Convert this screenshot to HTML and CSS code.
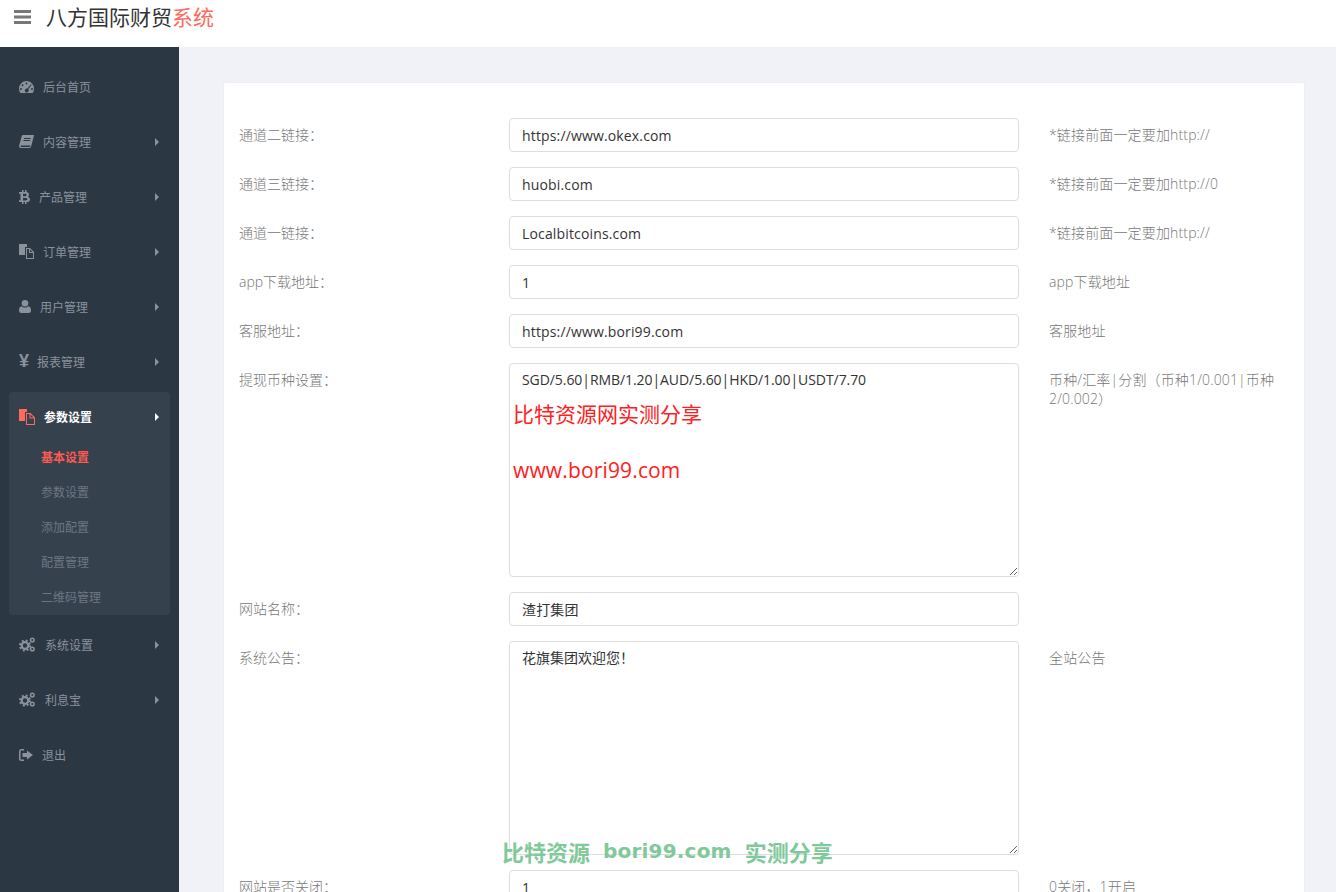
FILE: index.html
```html
<!DOCTYPE html>
<html lang="zh-CN">
<head>
  <meta charset="UTF-8">
  <title>八方国际财贸系统</title>
  <link rel="stylesheet" href="styles.css">
</head>
<body>
  <header class="topbar">
    <svg class="menu-btn" width="17" height="14" viewBox="0 0 17 14"><path d="M0 0h17v3H0zM0 5.500h17v3H0zM0 11h17v3H0z"/></svg>
    <h1 class="brand">八方国际财贸<span>系统</span></h1>
  </header>

  <div class="shell">
    <nav class="sidebar">
      <a class="nav-item">
        <svg class="icon" width="15" height="12" viewBox="0 0 15 12"><path fill-rule="evenodd" d="M7.500 0A7.500 7.500 0 0 0 0 7.500c0 1.700.5 3.200 1.400 4.500h12.200c.9-1.300 1.400-2.800 1.400-4.500A7.500 7.500 0 0 0 7.500 0zM7.500 1.500a1 1 0 1 1 0 2 1 1 0 0 1 0-2zM3.500 3.300a1 1 0 1 1 0 2 1 1 0 0 1 0-2zM2 7a1 1 0 1 1 0 2 1 1 0 0 1 0-2zM13 7a1 1 0 1 1 0 2 1 1 0 0 1 0-2zM11.800 3.200l.8.6-3.300 4.400a2 2 0 1 1-.9-.6z"/></svg>
        <span class="nav-text">后台首页</span>
      </a>
      <a class="nav-item">
        <svg class="icon" width="15" height="13" viewBox="0 0 15 13"><path fill-rule="evenodd" d="M4 0h10.500c.4 0 .5.300.4.700l-2.700 10.500c-.2.900-1 1.800-2 1.800H2C.8 13-.2 12 .1 10.700L2.800 1C3 .400 3.400 0 4 0zM2.300 10.500c-.5 0-.8.400-.8.800s.3.700.8.700h8.300c.4 0 .7-.3.800-.7l.2-.8zM5 3v1h6.500l.3-1zM4.400 5v1h6.500l.3-1z"/></svg>
        <span class="nav-text">内容管理</span>
        <i class="caret"></i>
      </a>
      <a class="nav-item">
        <svg class="icon" width="11" height="14" viewBox="0 0 11 14"><path fill-rule="evenodd" d="M3 0h1.500v2H6V0h1.500v2.100c1.500.3 2.500 1.200 2.500 2.700 0 .9-.5 1.600-1.200 2C10 7.200 11 8.100 11 9.500c0 1.700-1.300 2.500-3.500 2.600V14H6v-1.900H4.500V14H3v-1.900H0v-1.900h1.500V3.800H0V2h3zM4 3.800v2.400h2.300c.8 0 1.300-.5 1.300-1.200s-.5-1.200-1.300-1.200zM4 7.900v2.500h2.700c1 0 1.700-.5 1.700-1.300s-.7-1.200-1.700-1.200z"/></svg>
        <span class="nav-text">产品管理</span>
        <i class="caret"></i>
      </a>
      <a class="nav-item">
        <svg class="icon" width="15" height="15" viewBox="0 0 15 15"><path d="M0 0h8v3H6v8H0z"/><path fill-rule="evenodd" d="M7 4h4l4 4v7H7zM8 5v9h6V9h-4V5zM11 5.500V8h2.500z"/></svg>
        <span class="nav-text">订单管理</span>
        <i class="caret"></i>
      </a>
      <a class="nav-item">
        <svg class="icon" width="12" height="13" viewBox="0 0 12 13"><circle cx="6" cy="3.300" r="3.300"/><path d="M2.700 6.200C3.500 7 4.700 7.500 6 7.500s2.500-.5 3.300-1.300c1.800.2 2.700 1.700 2.700 4.300 0 1.500-.8 2.500-2.300 2.500H2.300C.8 13 0 12 0 10.500c0-2.600.9-4.100 2.700-4.300z"/></svg>
        <span class="nav-text">用户管理</span>
        <i class="caret"></i>
      </a>
      <a class="nav-item">
        <b class="icon glyph-yen">¥</b>
        <span class="nav-text">报表管理</span>
        <i class="caret"></i>
      </a>

      <div class="nav-group">
        <a class="nav-item nav-head">
          <svg class="icon" width="16" height="16" viewBox="0 0 16 16"><path d="M0 0h8v3H6v9H0z"/><path fill-rule="evenodd" d="M7 4h4.500L16 8.500V16H7zM8 5v10h7V9.500h-4.500V5zM11.500 5.500v3h3z"/></svg>
          <span class="nav-text">参数设置</span>
          <i class="caret"></i>
        </a>
        <ul class="sub-list">
          <li class="current">基本设置</li>
          <li>参数设置</li>
          <li>添加配置</li>
          <li>配置管理</li>
          <li>二维码管理</li>
        </ul>
      </div>

      <a class="nav-item">
        <svg class="icon" width="17" height="15" viewBox="0 0 16 15"><use href="#gears"/></svg>
        <span class="nav-text">系统设置</span>
        <i class="caret"></i>
      </a>
      <a class="nav-item">
        <svg class="icon" width="17" height="15" viewBox="0 0 16 15"><use href="#gears"/></svg>
        <span class="nav-text">利息宝</span>
        <i class="caret"></i>
      </a>
      <a class="nav-item">
        <svg class="icon" width="14" height="12" viewBox="0 0 14 12"><path d="M5 0v1.500H2.500c-.6 0-1 .4-1 1v7c0 .6.400 1 1 1H5V12H2.500A2.500 2.500 0 0 1 0 9.500v-7A2.500 2.500 0 0 1 2.500 0z"/><path d="M8 1.500 14 6l-6 4.500V8H3.500V4H8z"/></svg>
        <span class="nav-text">退出</span>
      </a>
    </nav>

    <main class="content">
      <form class="card">
        <div class="form-row">
          <label>通道二链接：</label>
          <input type="text" value="https://www.okex.com">
          <p class="help">*链接前面一定要加http://</p>
        </div>
        <div class="form-row">
          <label>通道三链接：</label>
          <input type="text" value="huobi.com">
          <p class="help">*链接前面一定要加http://0</p>
        </div>
        <div class="form-row">
          <label>通道一链接：</label>
          <input type="text" value="Localbitcoins.com">
          <p class="help">*链接前面一定要加http://</p>
        </div>
        <div class="form-row">
          <label>app下载地址：</label>
          <input type="text" value="1">
          <p class="help">app下载地址</p>
        </div>
        <div class="form-row">
          <label>客服地址：</label>
          <input type="text" value="https://www.bori99.com">
          <p class="help">客服地址</p>
        </div>
        <div class="form-row">
          <label>提现币种设置：</label>
          <div class="area-wrap">
            <textarea class="rates">SGD/5.60|RMB/1.20|AUD/5.60|HKD/1.00|USDT/7.70</textarea>
            <div class="stamp">比特资源网实测分享<br><span>www.bori99.com</span></div>
          </div>
          <p class="help">币种/汇率|分割（币种1/0.001|币种2/0.002）</p>
        </div>
        <div class="form-row">
          <label>网站名称：</label>
          <input type="text" value="渣打集团">
          <p class="help"></p>
        </div>
        <div class="form-row">
          <label>系统公告：</label>
          <div class="area-wrap">
            <textarea>花旗集团欢迎您！</textarea>
          </div>
          <p class="help">全站公告</p>
        </div>
        <div class="form-row">
          <label>网站是否关闭：</label>
          <input type="text" value="1">
          <p class="help">0关闭，1开启</p>
        </div>
      </form>
    </main>
  </div>

  <div class="watermark">
    <span>比特资源</span>
    <span class="watermark-url">bori99.com</span>
    <span>实测分享</span>
  </div>

  <svg class="defs" width="0" height="0">
    <defs>
      <g id="gears">
        <circle cx="5.500" cy="8.500" r="3.300" fill="none" stroke="currentColor" stroke-width="2.200"/>
        <circle cx="5.500" cy="8.500" r="5" fill="none" stroke="currentColor" stroke-width="2" stroke-dasharray="2 1.930"/>
        <circle cx="12.800" cy="3" r="1.800" fill="none" stroke="currentColor" stroke-width="1.500"/>
        <circle cx="12.800" cy="12" r="1.800" fill="none" stroke="currentColor" stroke-width="1.500"/>
      </g>
    </defs>
  </svg>
</body>
</html>
```

FILE: styles.css
```css
* {
  box-sizing: border-box;
}

html, body {
  height: 100%;
  margin: 0;
  overflow: hidden;
}

body {
  display: flex;
  flex-direction: column;
  position: relative;
  font-family: "Open Sans", "Noto Sans CJK SC", sans-serif;
  background-color: #f0f2f7;
  color: #333;
}

.topbar {
  flex: none;
  height: 47px;
  display: flex;
  align-items: flex-start;
  background-color: #fff;
  padding-left: 14px;
}

.menu-btn {
  fill: #777;
  margin-top: 10px;
}

.brand {
  margin: 3px 0 0 15px;
  font-size: 21px;
  line-height: 28px;
  font-weight: 400;
  color: #333;
}

.brand span {
  color: #ff6a60;
}

.shell {
  flex: 1;
  display: flex;
  min-height: 0;
}

/* sidebar */
.sidebar {
  flex: none;
  width: 179px;
  padding-top: 13px;
  background-color: #2c3744;
  color: #8a929c;
  font-size: 12px;
}

.nav-item {
  height: 55px;
  display: flex;
  align-items: center;
  gap: 9px;
  padding: 0 20px 2px 19px;
}

.icon {
  flex: none;
  fill: currentColor;
}

.glyph-yen {
  width: 9px;
  font: bold 18px "Liberation Sans", sans-serif;
  overflow: visible;
}

.caret {
  margin-left: auto;
  border-left: 4px solid currentColor;
  border-top: 4px solid transparent;
  border-bottom: 4px solid transparent;
}

.nav-group {
  margin: 2px 9px 3px;
  background-color: #36414e;
  border-radius: 4px;
}

.nav-head {
  height: 50px;
  padding: 0 11px 0 10px;
  color: #fff;
  font-weight: 700;
}

.nav-head .icon {
  fill: #ff6a60;
}

.sub-list {
  list-style: none;
  margin: -2px 0 0;
  padding: 0;
}

.sub-list li {
  height: 35px;
  line-height: 35px;
  padding-left: 32px;
  color: #6d7783;
}

.sub-list .current {
  color: #ff5a52;
  font-weight: 700;
}

/* form */
.content {
  flex: 1;
  padding: 36px 32px 0 45px;
  min-width: 0;
}

.card {
  background-color: #fff;
  padding: 35px 15px 0;
  box-shadow: 0 0 2px rgba(0, 0, 0, 0.04);
}

.form-row {
  display: grid;
  grid-template-columns: 270px 510px 1fr;
  margin-bottom: 15px;
  font-size: 14px;
}

.form-row label {
  font-family: "Open Sans", "Noto Sans CJK TC", sans-serif;
  font-weight: 300;
  color: #777;
  line-height: 19px;
  padding-top: 7px;
}

.form-row input,
.form-row textarea {
  width: 510px;
  border: 1px solid #ddd;
  border-radius: 4px;
  padding: 6px 12px;
  font: inherit;
  color: #333;
  background-color: #fff;
}

.form-row input {
  height: 34px;
  letter-spacing: 0.15px;
}

.form-row textarea {
  display: block;
  height: 214px;
  line-height: 20px;
}

.form-row .rates {
  letter-spacing: -0.07px;
}

.area-wrap {
  position: relative;
}

.stamp {
  position: absolute;
  top: 23px;
  left: 4px;
  font-size: 21px;
  line-height: 56px;
  color: #ff2020;
}

.stamp span {
  letter-spacing: 0.15px;
}

.help {
  margin: 0;
  padding: 7px 12px 0 30px;
  font-weight: 300;
  line-height: 19px;
  letter-spacing: 0.15px;
  color: #777;
}

.watermark {
  position: absolute;
  left: 502px;
  top: 836px;
  display: flex;
  gap: 13px;
  font: 700 22px/30px "Noto Sans CJK SC", sans-serif;
  white-space: nowrap;
  color: #7fc99a;
}

.watermark-url {
  font: 700 20px/30px "DejaVu Sans", sans-serif;
  letter-spacing: 0.2px;
}

.defs {
  position: absolute;
}
```
